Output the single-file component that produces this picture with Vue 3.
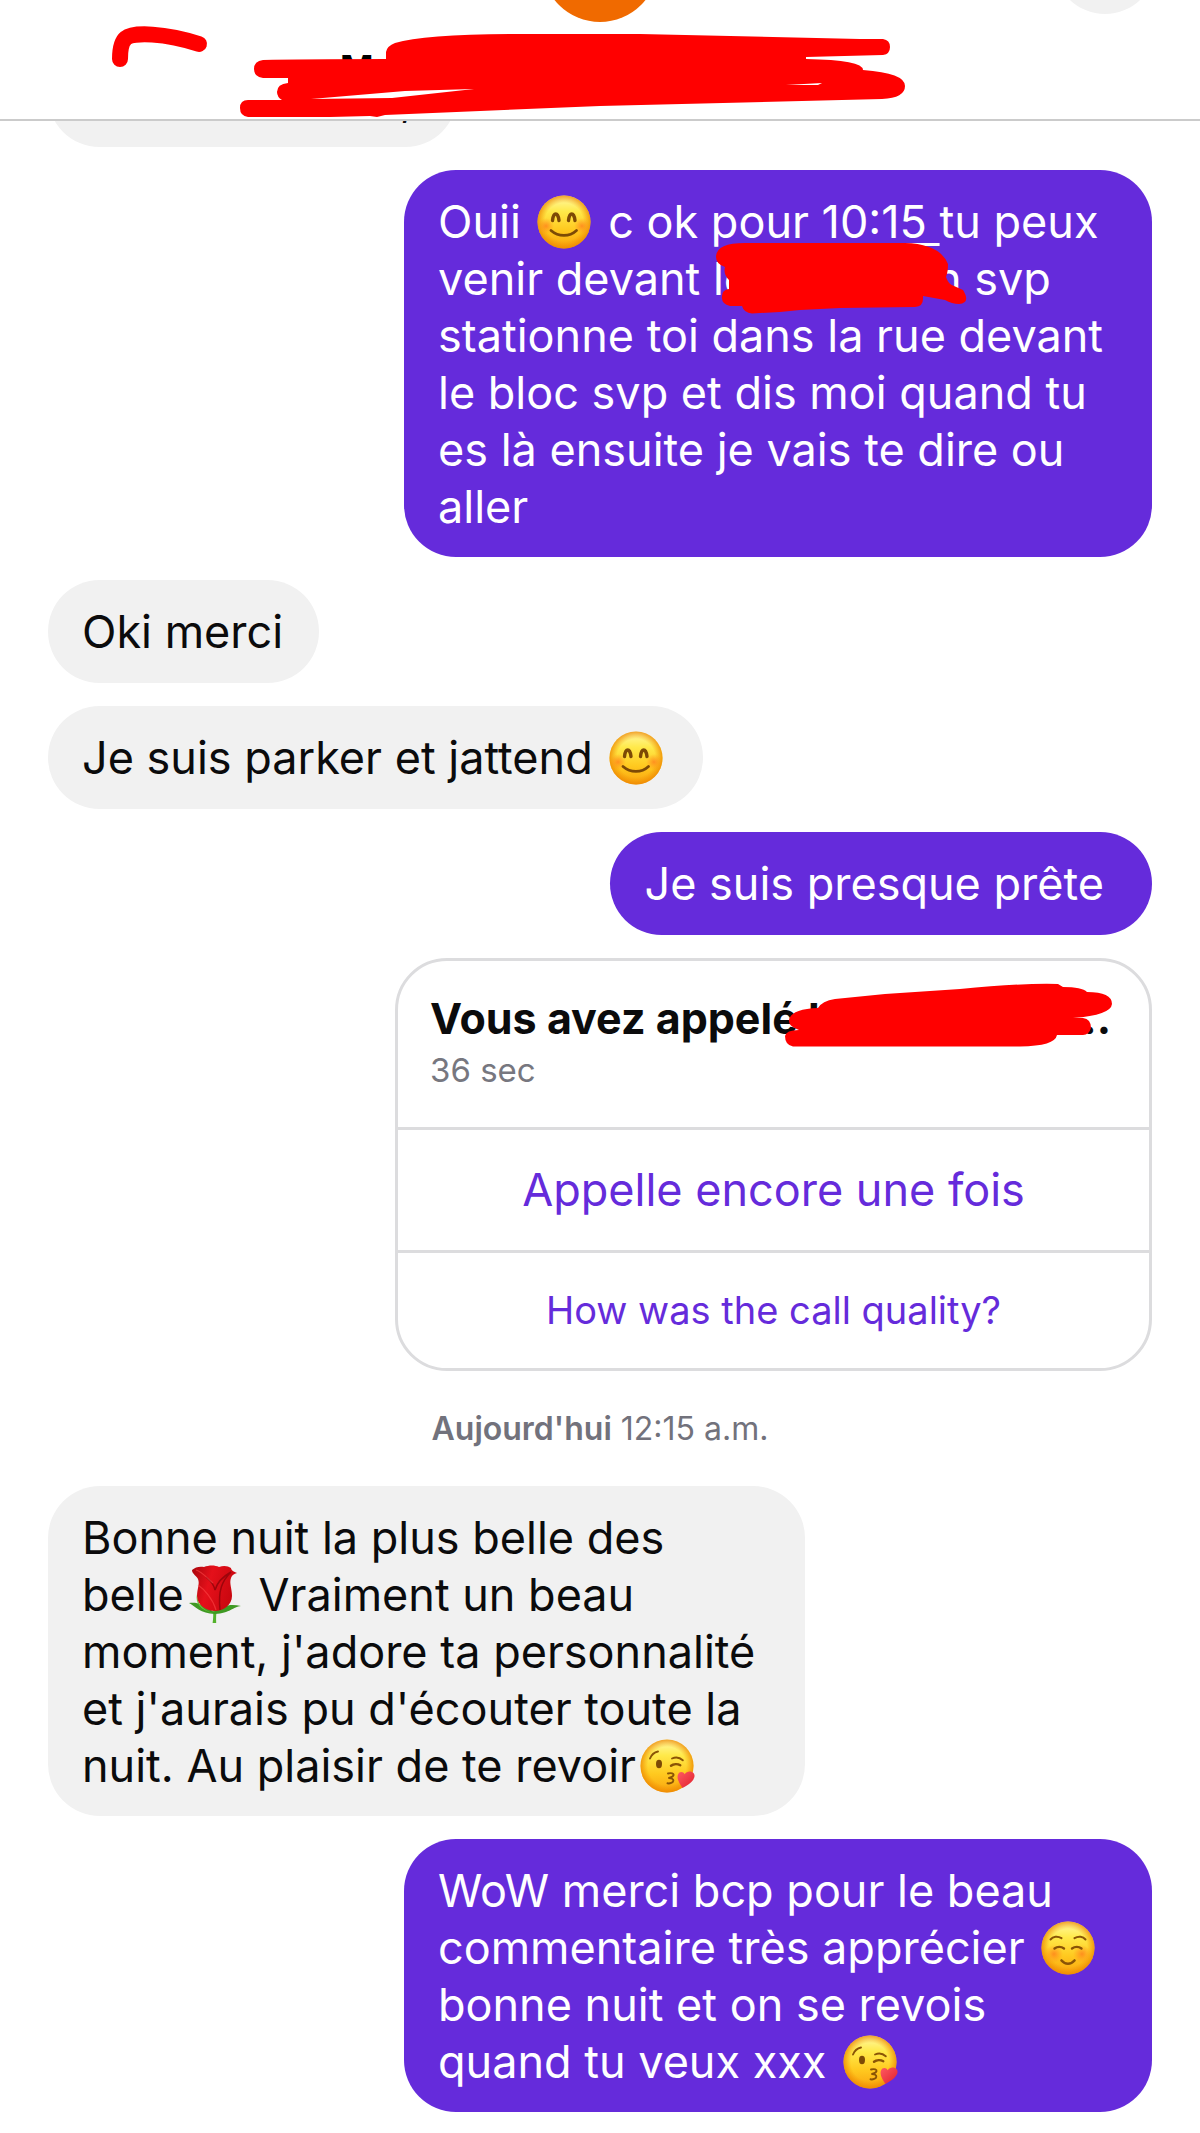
<script setup>
import { ref } from 'vue'

const contact = ref('M')
const call = {
  title: 'Vous avez appelé l',
  duration: '36 sec',
  again: 'Appelle encore une fois',
  quality: 'How was the call quality?',
}
</script>

<template>
  <div class="app">
    <svg class="sprite" aria-hidden="true">
      <defs>
        <linearGradient id="face" x1="0" y1="0" x2="0" y2="1">
          <stop offset="0" stop-color="#fff9a8" />
          <stop offset="0.3" stop-color="#ffe94a" />
          <stop offset="0.65" stop-color="#ffc91f" />
          <stop offset="1" stop-color="#f9a30f" />
        </linearGradient>
        <radialGradient id="rim">
          <stop offset="0.72" stop-color="#f08c00" stop-opacity="0" />
          <stop offset="1" stop-color="#ec8400" stop-opacity="0.75" />
        </radialGradient>
        <radialGradient id="blush">
          <stop offset="0" stop-color="#ff7a1c" stop-opacity="0.75" />
          <stop offset="1" stop-color="#ff8a1c" stop-opacity="0" />
        </radialGradient>
        <linearGradient id="heart" x1="0" y1="0" x2="1" y2="1">
          <stop offset="0" stop-color="#ff5a62" />
          <stop offset="1" stop-color="#e01f2c" />
        </linearGradient>
        <linearGradient id="petal" x1="0" y1="0" x2="1" y2="0.3">
          <stop offset="0" stop-color="#a8060d" />
          <stop offset="0.45" stop-color="#e5101a" />
          <stop offset="1" stop-color="#c9070f" />
        </linearGradient>
      </defs>
      <symbol id="smile" viewBox="0 0 54 54">
        <circle cx="27" cy="27" r="26.5" fill="url(#face)" />
        <circle cx="27" cy="27" r="26.5" fill="url(#rim)" />
        <circle cx="9" cy="31" r="8" fill="url(#blush)" />
        <circle cx="45" cy="31" r="8" fill="url(#blush)" />
        <g fill="none" stroke="#7d4a05" stroke-linecap="round">
          <path d="M15.500 25.500c.5-4.500 1.800-6.500 3.200-6.500s2.800 2 3.300 6.500M31.500 25.500c.5-4.500 1.800-6.500 3.200-6.500s2.800 2 3.300 6.500" stroke-width="3.400" />
          <path d="M14 35.500c7.500 6.500 18.500 6.500 25.500 0" stroke-width="2.800" />
        </g>
      </symbol>
      <symbol id="kiss" viewBox="0 0 56 54">
        <circle cx="27" cy="27" r="26.5" fill="url(#face)" />
        <circle cx="27" cy="27" r="26.5" fill="url(#rim)" />
        <ellipse cx="19" cy="25" rx="3" ry="4.200" fill="#7d4a05" />
        <g fill="none" stroke="#8a5406" stroke-width="1.900" stroke-linecap="round" stroke-linejoin="round">
          <path d="M10 19.500c1.500-3.800 4.500-6.200 8-7" />
          <path d="M32 19.500c3.500-1.500 8-.8 10.800 1.800" />
          <path d="M31 26.800c2.500-2 6.500-2.200 9.300-.6" stroke-width="2.400" />
          <path d="M28 34.500c3.500-1 6 .2 5.500 1.800s-3 2.300-4.500 2.700c2.500.1 4.600 1 4.300 2.800s-3.300 3-5.800 2.500" />
        </g>
        <path d="M42.500 49C39 44 36.500 39.500 38 35.500c1.200-3.300 5.200-3.300 6.700-.2 1.800-3.400 6.800-3.800 9-1 2.700 3.600-1 9.700-11.200 14.700Z" fill="url(#heart)" />
      </symbol>
      <symbol id="relaxed" viewBox="0 0 54 54">
        <circle cx="27" cy="27" r="26.5" fill="url(#face)" />
        <circle cx="27" cy="27" r="26.5" fill="url(#rim)" />
        <circle cx="13" cy="33" r="9" fill="url(#blush)" />
        <circle cx="41" cy="33" r="9" fill="url(#blush)" />
        <g fill="none" stroke="#8a5406" stroke-width="2" stroke-linecap="round">
          <path d="M9.500 18.500c2.500-3 7-3.800 11-1.300M44.500 18.500c-2.500-3-7-3.800-11-1.300" />
          <path d="M13.500 27.500c2.800-2 6.800-2 9.500 0M31 27.500c2.800-2 6.800-2 9.500 0" stroke-width="2.400" />
          <path d="M20.500 39.500c3.700 4.300 9.300 4.300 13 0" stroke-width="2.600" />
        </g>
      </symbol>
      <symbol id="rose" viewBox="0 0 54 60">
        <path d="M25 44h4c-1 5-1 9-.8 14h-3.600c.8-5 .8-9 .4-14Z" fill="#54b22c" />
        <path d="M1 38c8-1 14 1 25 9 9-7 17-8 27-6-8 1-11 7-26 8C12 48 8 42 1 38Z" fill="#3f9a24" />
        <path d="M9 29c-2 9 3 16 17 19.500C15 45 9 39 9 29Z" fill="#6fc437" />
        <path d="M4 5c3-3 8-4 12-3 5-2 11-2 15 0 5-2 9-1 12 1 0 2 3 4 6 5-3 1-5 2-6 5-2 5 1 11 1 18 0 9-9 15-17 15S9 40 9 31c0-7 3-12 1-17-1-3-6-5-6-9Z" fill="url(#petal)" />
        <path d="M18 12c5 4 8 8 9 13 2-7 7-13 16-18-9 9-13 18-11 38" fill="none" stroke="#9c050b" stroke-width="1.500" />
        <path d="M8 5c6 2 9 6 17 13M10 20c6 4 15 14 18 25" fill="none" stroke="#ff4b4b" stroke-opacity="0.55" stroke-width="1.200" />
      </symbol>
    </svg>

    <header class="topbar">
      <span class="avatar"></span>
      <span class="action"></span>
      <h1 class="contact">{{ contact }}</h1>
      <svg class="marker" viewBox="0 0 1200 120" aria-hidden="true">
        <path d="M120 59C120 50 121 42 126 38C133 32 165 33 199 44" fill="none" stroke="#f00" stroke-width="16" stroke-linecap="round" stroke-linejoin="round" />
        <path fill-rule="evenodd" fill="#f00" d="M263 60Q300 59 386 59V52Q387 46 395 43Q425 34 520 34H640L860 39H883Q890 40 890 47T883 55L806 57V59Q863 60 863 70Q905 73 905 86Q905 98 882 99L600 106L385 115L377 117L370 116L330 117H248Q240 116 240 108T248 100H282Q277 97 277 92Q277 84 288 83V78H263Q254 77 254 69T263 60ZM311 99L392 98L474 89L405 91ZM786 85H818L822 83Z" />
      </svg>
    </header>

    <main class="thread">
      <p class="bubble received previous">,</p>

      <p class="bubble sent wide">
        <span class="line">Ouii <svg class="emoji" role="img" aria-label="😊"><use href="#smile" /></svg> c ok pour <a class="time" href="#">10:15&nbsp;</a>tu peux</span>
        <span class="line">venir devant le<span class="gap"></span>n svp</span>
        <span class="line">stationne toi dans la rue devant</span>
        <span class="line">le bloc svp et dis moi quand tu</span>
        <span class="line">es là ensuite je vais te dire ou</span>
        <span class="line">aller</span>
        <svg class="scribble place-mark" viewBox="716 242 252 72" aria-hidden="true">
          <path fill="#f00" d="M716 257Q716 243 745 243H905Q940 244 948 264Q948 272 946 277Q948 284 954 286L963 290Q971 303 959 304Q952 304 945 300L923 296Q924 307 915 307L840 308L800 310L780 312L752 313.500Q744 313 742 306H730Q721 304 722 296Q722 290 729 289V280Q723 274 725 267Q716 264 716 257Z" />
        </svg>
      </p>

      <p class="bubble received">Oki merci</p>
      <p class="bubble received">Je suis parker et jattend <svg class="emoji" role="img" aria-label="😊"><use href="#smile" /></svg></p>
      <p class="bubble sent">Je suis presque prête</p>

      <section class="card">
        <div class="summary">
          <h2 class="title"><span>{{ call.title }}</span><span>...</span></h2>
          <p class="duration">{{ call.duration }}</p>
          <svg class="scribble name-mark" viewBox="785 983 328 64" aria-hidden="true">
            <path fill="#f00" d="M789 1020Q791 1009 818 1008Q822 1001 835 999L885 994L960 989Q1020 983 1058 984L1063 987Q1082 987 1087 992Q1112 992 1112 1004Q1111 1015 1073 1018H1083Q1091 1019 1091 1028Q1089 1035 1083 1035H1057Q1055 1046 1020 1046.500H793Q785 1045 785 1036Q786 1030 799 1030Q788 1026 789 1020Z" />
          </svg>
        </div>
        <button class="again" type="button">{{ call.again }}</button>
        <button class="quality" type="button">{{ call.quality }}</button>
      </section>

      <p class="stamp"><strong>Aujourd'hui</strong> 12:15 a.m.</p>

      <p class="bubble received wide">
        <span class="line">Bonne nuit la plus belle des</span>
        <span class="line">belle<svg class="emoji rose" role="img" aria-label="🌹"><use href="#rose" /></svg> Vraiment un beau</span>
        <span class="line">moment, j'adore ta personnalité</span>
        <span class="line">et j'aurais pu d'écouter toute la</span>
        <span class="line">nuit. Au plaisir de te revoir<svg class="emoji kiss" role="img" aria-label="😘"><use href="#kiss" /></svg></span>
      </p>

      <p class="bubble sent wide">
        <span class="line">WoW merci bcp pour le beau</span>
        <span class="line">commentaire très apprécier <svg class="emoji" role="img" aria-label="☺️"><use href="#relaxed" /></svg></span>
        <span class="line">bonne nuit et on se revois</span>
        <span class="line">quand tu veux xxx <svg class="emoji kiss" role="img" aria-label="😘"><use href="#kiss" /></svg></span>
      </p>
    </main>
  </div>
</template>

<style>
body {
  margin: 0;
  background: #fff;
}
</style>

<style scoped>
.app {
  font-family: Inter, "Liberation Sans", sans-serif;
  color: #0b0b0c;
  overflow: hidden;
}
.sprite {
  position: absolute;
  width: 0;
  height: 0;
}
.topbar {
  position: relative;
  z-index: 1;
  box-sizing: border-box;
  height: 121px;
  padding: 46px 0 0 340px;
  overflow: hidden;
  background: #fff;
  border-bottom: 2px solid #cbcbcb;
}
.contact {
  margin: 0;
  font-size: 36px;
  line-height: 44px;
  font-weight: 700;
  color: #000;
}
.avatar,
.action {
  position: absolute;
  border-radius: 50%;
}
.avatar {
  left: 50%;
  top: -94px;
  width: 116px;
  height: 116px;
  margin-left: -58px;
  background: #f06a00;
}
.action {
  right: 44px;
  top: -88px;
  width: 102px;
  height: 102px;
  background: #f1f1f1;
}
.marker {
  position: absolute;
  left: 0;
  top: 0;
  width: 100%;
}
.thread {
  display: flex;
  flex-direction: column;
  align-items: flex-start;
  gap: 23px;
  padding: 0 48px 20px;
}
.bubble {
  position: relative;
  box-sizing: border-box;
  max-width: 100%;
  min-height: 103px;
  margin: 0;
  padding: 23px 36px 22px 34px;
  border-radius: 52px;
  font-size: 45px;
  line-height: 57px;
}
.received {
  background: #f1f1f1;
}
.sent {
  align-self: flex-end;
  padding-right: 48px;
  background: #652bdb;
  color: #fff;
}
.wide {
  width: 748px;
}
.received.wide {
  width: 757px;
}
.previous {
  width: 409px;
  margin-top: -77px;
  padding: 26px 44px 20px;
  text-align: right;
}
.line {
  display: block;
  height: 57px;
  white-space: nowrap;
}
.time {
  color: inherit;
  text-decoration: underline;
  text-decoration-thickness: 3px;
  text-underline-offset: 5px;
}
.emoji {
  width: 54px;
  height: 54px;
  margin: -4px 4px;
  vertical-align: -7px;
}
.emoji.kiss {
  width: 56px;
}
.emoji.rose {
  height: 60px;
  vertical-align: -10px;
}
.gap {
  display: inline-block;
  width: 185px;
}
.scribble {
  position: absolute;
}
.place-mark {
  left: 312px;
  top: 72px;
  width: 252px;
  height: 72px;
}
.card {
  align-self: flex-end;
  box-sizing: border-box;
  width: 757px;
  max-width: 100%;
  border: 3px solid #dcdcde;
  border-radius: 52px;
  overflow: hidden;
}
.summary {
  position: relative;
  box-sizing: border-box;
  height: 166px;
  padding: 31px 38px 0 32px;
}
.title {
  display: flex;
  justify-content: space-between;
  margin: 0;
  font-size: 43px;
  line-height: 52px;
  font-weight: 700;
  white-space: nowrap;
}
.duration {
  margin: 6px 0 0;
  font-size: 33px;
  line-height: 40px;
  color: #77777f;
}
.name-mark {
  left: 387px;
  top: 22px;
  width: 328px;
  height: 64px;
}
.again,
.quality {
  display: block;
  width: 100%;
  padding: 0 0 2px;
  border: 0;
  border-top: 3px solid #dcdcde;
  background: none;
  font-family: inherit;
  color: #652bdb;
  cursor: pointer;
}
.again {
  height: 123px;
  font-size: 45px;
}
.quality {
  height: 118px;
  font-size: 38px;
}
.stamp {
  align-self: center;
  margin: 16px 0 15px;
  font-size: 32px;
  line-height: 38px;
  color: #72727c;
}
.stamp strong {
  font-weight: 600;
}
</style>
